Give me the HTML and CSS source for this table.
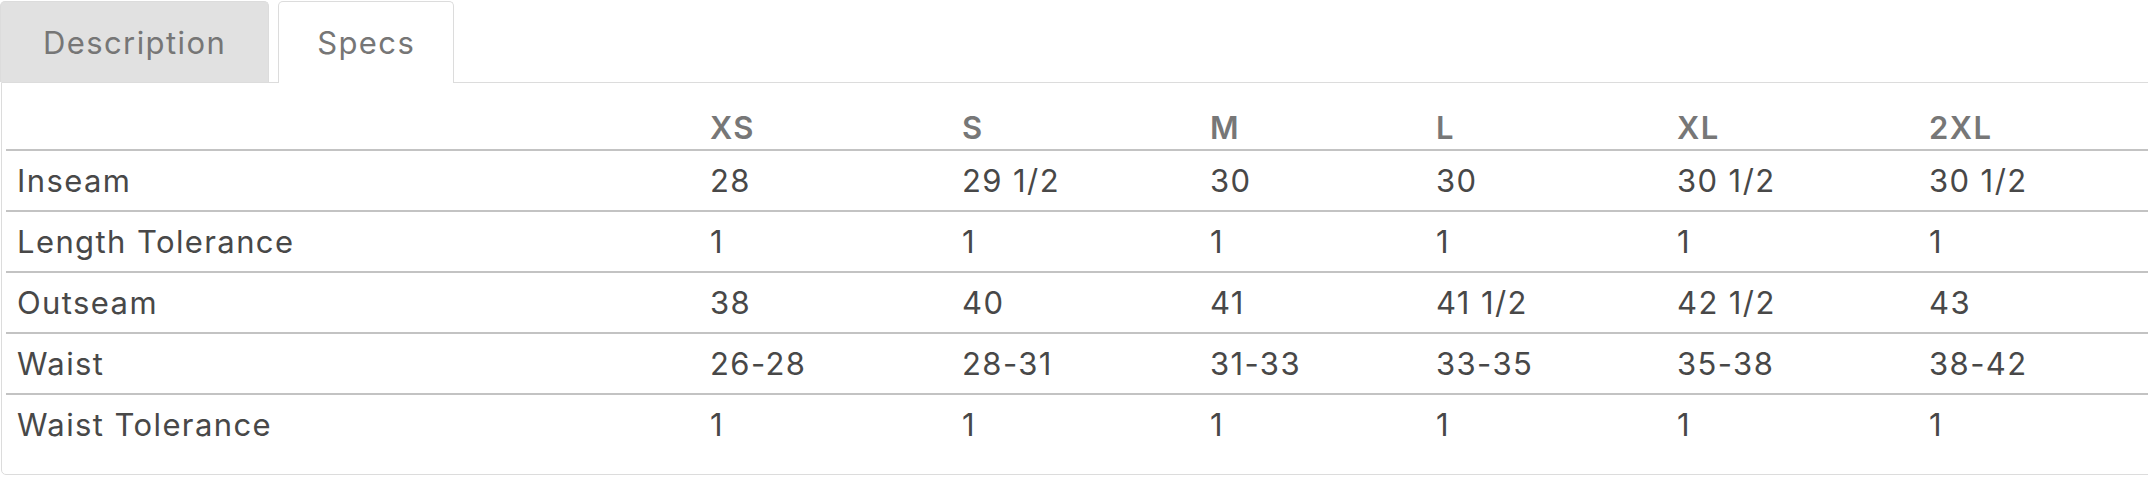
FILE: index.html
```html
<!DOCTYPE html>
<html lang="en">
<head>
<meta charset="utf-8">
<title>Specs</title>
<link rel="stylesheet" href="styles.css">
</head>
<body>
<div class="tabs">
  <ul class="tab-list">
    <li class="tab">Description</li>
    <li class="tab tab-active">Specs</li>
  </ul>
  <div class="panel">
    <table class="specs">
      <colgroup>
        <col class="c-label">
        <col class="c-xs">
        <col class="c-s">
        <col class="c-m">
        <col class="c-l">
        <col class="c-xl">
        <col class="c-2xl">
      </colgroup>
      <thead>
        <tr><th></th><th>XS</th><th>S</th><th>M</th><th>L</th><th>XL</th><th>2XL</th></tr>
      </thead>
      <tbody>
        <tr><td>Inseam</td><td>28</td><td>29 1/2</td><td>30</td><td>30</td><td>30 1/2</td><td>30 1/2</td></tr>
        <tr><td>Length Tolerance</td><td>1</td><td>1</td><td>1</td><td>1</td><td>1</td><td>1</td></tr>
        <tr><td>Outseam</td><td>38</td><td>40</td><td>41</td><td>41 1/2</td><td>42 1/2</td><td>43</td></tr>
        <tr><td>Waist</td><td>26-28</td><td>28-31</td><td>31-33</td><td>33-35</td><td>35-38</td><td>38-42</td></tr>
        <tr><td>Waist Tolerance</td><td>1</td><td>1</td><td>1</td><td>1</td><td>1</td><td>1</td></tr>
      </tbody>
    </table>
  </div>
</div>
</body>
</html>
```

FILE: styles.css
```css
html, body {
  margin: 0;
  padding: 0;
  background: #ffffff;
  overflow: hidden;
}

body {
  font-family: Inter, "DejaVu Sans", sans-serif;
  font-size: 31px;
  color: #484848;
}

.tabs {
  width: 2200px;
  padding-top: 1px;
}

.tab-list {
  list-style: none;
  margin: 0;
  padding: 0;
  display: flex;
  gap: 9px;
  position: relative;
  z-index: 1;
  margin-bottom: -1px;
}

.tab {
  height: 80px;
  line-height: 82px;
  padding: 0 42px;
  border: 1px solid #dcdcdc;
  border-bottom: none;
  border-radius: 5px 5px 0 0;
  background: #e1e1e1;
  color: #767676;
  letter-spacing: 1.4px;
}

.tab-active {
  background: #ffffff;
  padding: 0 38px 1px;
}

.panel {
  margin-left: 1px;
  border: 1px solid #dcdcdc;
  border-radius: 0 0 0 5px;
  padding: 15px 0 20px 4px;
}

.specs {
  border-collapse: collapse;
  table-layout: fixed;
  width: 2190px;
}

.c-label { width: 693px; }
.c-xs { width: 252px; }
.c-s { width: 248px; }
.c-m { width: 226px; }
.c-l { width: 241px; }
.c-xl { width: 252px; }

.specs th,
.specs td {
  text-align: left;
  padding: 8px 11px;
  line-height: 43px;
  white-space: nowrap;
  letter-spacing: 1.4px;
}

.specs th {
  padding-bottom: 0;
  font-weight: 600;
  color: #777777;
  border-bottom: 2px solid #c3c3c3;
}

.specs tbody tr + tr td {
  border-top: 2px solid #c3c3c3;
}
```
